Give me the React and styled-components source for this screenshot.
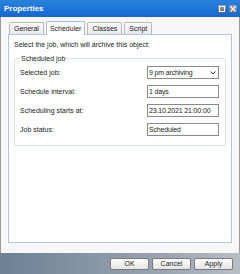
import React from "react";
import styled, { createGlobalStyle } from "styled-components";

const Global = createGlobalStyle`
  html, body { margin: 0; padding: 0; }
  body { font-family: "Liberation Sans", Arial, sans-serif; font-size: 7px; color: #222; }
`;

const Window = styled.div`
  width: 240px;
  height: 274px;
  box-sizing: border-box;
  display: flex;
  flex-direction: column;
  background: #f7f7f7;
  border-left: 1px solid #9a9a9a;
  border-right: 1px solid #9a9a9a;
`;

const TitleBar = styled.div`
  height: 17px;
  margin: 0 -1px;
  display: flex;
  align-items: center;
  justify-content: space-between;
  padding: 0 3px 0 4px;
  background: linear-gradient(#2a82dc, #1268d2);
  color: #fff;
  font-weight: bold;
  font-size: 8px;
`;

const Ctrls = styled.div`
  display: flex;
  gap: 3px;
`;

const Ctrl = styled.div`
  width: 8px;
  height: 8px;
  border-radius: 1px;
  background: linear-gradient(#9aa3ab, #5d6670);
  display: flex;
  align-items: center;
  justify-content: center;
`;

const Body = styled.div`
  flex: 1;
  display: flex;
  flex-direction: column;
  padding: 3px 7px 10px 7px;
`;

const Tabs = styled.div`
  display: flex;
  align-items: flex-end;
  gap: 2px;
  height: 14px;
  padding-left: 1px;
`;

const Tab = styled.div`
  height: ${(p) => (p.$active ? 14 : 12)}px;
  padding: 0 ${(p) => (p.$active ? 3 : 4)}px;
  box-sizing: border-box;
  display: flex;
  align-items: center;
  border: 1px solid ${(p) => (p.$active ? "#a9b8cc" : "#b8b8b8")};
  border-bottom: none;
  border-radius: 2px 2px 0 0;
  background: ${(p) => (p.$active ? "#fff" : "linear-gradient(#fafafa, #e9e9e9)")};
  margin-bottom: ${(p) => (p.$active ? -1 : 0)}px;
  position: relative;
`;

const Panel = styled.div`
  flex: 1;
  border: 1px solid #b4c4d8;
  background: #fff;
  padding: 6px 5px;
`;

const Intro = styled.div`
  margin-bottom: 7px;
`;

const Group = styled.fieldset`
  margin: 0;
  padding: 1px 6px 6px 5px;
  border: 1px solid #dde3ea;
  border-radius: 2px;
`;

const Legend = styled.legend`
  padding: 0 1px;
`;

const Row = styled.div`
  display: grid;
  grid-template-columns: 1fr 72px;
  align-items: center;
  height: 19px;
`;

const Field = styled.div`
  height: 13px;
  box-sizing: border-box;
  border: 1px solid #8a8a8a;
  padding: 0 2px 0 1px;
  letter-spacing: -0.15px;
  white-space: nowrap;
  overflow: hidden;
  display: flex;
  align-items: center;
  justify-content: space-between;
`;

const Footer = styled.div`
  height: 21px;
  margin: 0 -1px;
  display: flex;
  align-items: center;
  justify-content: flex-end;
  gap: 3px;
  padding-right: 7px;
  background: linear-gradient(90deg, #6c8196, #9aa6b2 70%, #b8bec5);
`;

const Button = styled.button`
  width: 39px;
  height: 12px;
  padding: 0;
  font: inherit;
  color: #222;
  border: 1px solid #7a7a7a;
  border-radius: 2px;
  background: linear-gradient(#fdfdfd, #e4e4e4);
`;

const rows = [
  ["Selected job:", "9 pm archiving", true],
  ["Schedule interval:", "1 days"],
  ["Scheduling starts at:", "23.10.2021 21:00:00"],
  ["Job status:", "Scheduled"],
];

export default function App() {
  return (
    <>
      <Global />
      <Window>
        <TitleBar>
          Properties
          <Ctrls>
            <Ctrl>
              <svg width="6" height="6"><rect x="0.5" y="0.5" width="5" height="5" fill="none" stroke="#fff" /></svg>
            </Ctrl>
            <Ctrl>
              <svg width="6" height="6"><path d="M0.5 0.5 L5.5 5.5 M5.5 0.5 L0.5 5.5" stroke="#fff" strokeWidth="1.2" /></svg>
            </Ctrl>
          </Ctrls>
        </TitleBar>
        <Body>
          <Tabs>
            <Tab>General</Tab>
            <Tab $active>Scheduler</Tab>
            <Tab>Classes</Tab>
            <Tab>Script</Tab>
          </Tabs>
          <Panel>
            <Intro>Select the job, which will archive this object:</Intro>
            <Group>
              <Legend>Scheduled job</Legend>
              {rows.map(([label, value, select]) => (
                <Row key={label}>
                  <span>{label}</span>
                  <Field>
                    {value}
                    {select && (
                      <svg width="6" height="4"><path d="M0.5 0.5 L3 3 L5.5 0.5" fill="none" stroke="#333" /></svg>
                    )}
                  </Field>
                </Row>
              ))}
            </Group>
          </Panel>
        </Body>
        <Footer>
          <Button>OK</Button>
          <Button>Cancel</Button>
          <Button>Apply</Button>
        </Footer>
      </Window>
    </>
  );
}
